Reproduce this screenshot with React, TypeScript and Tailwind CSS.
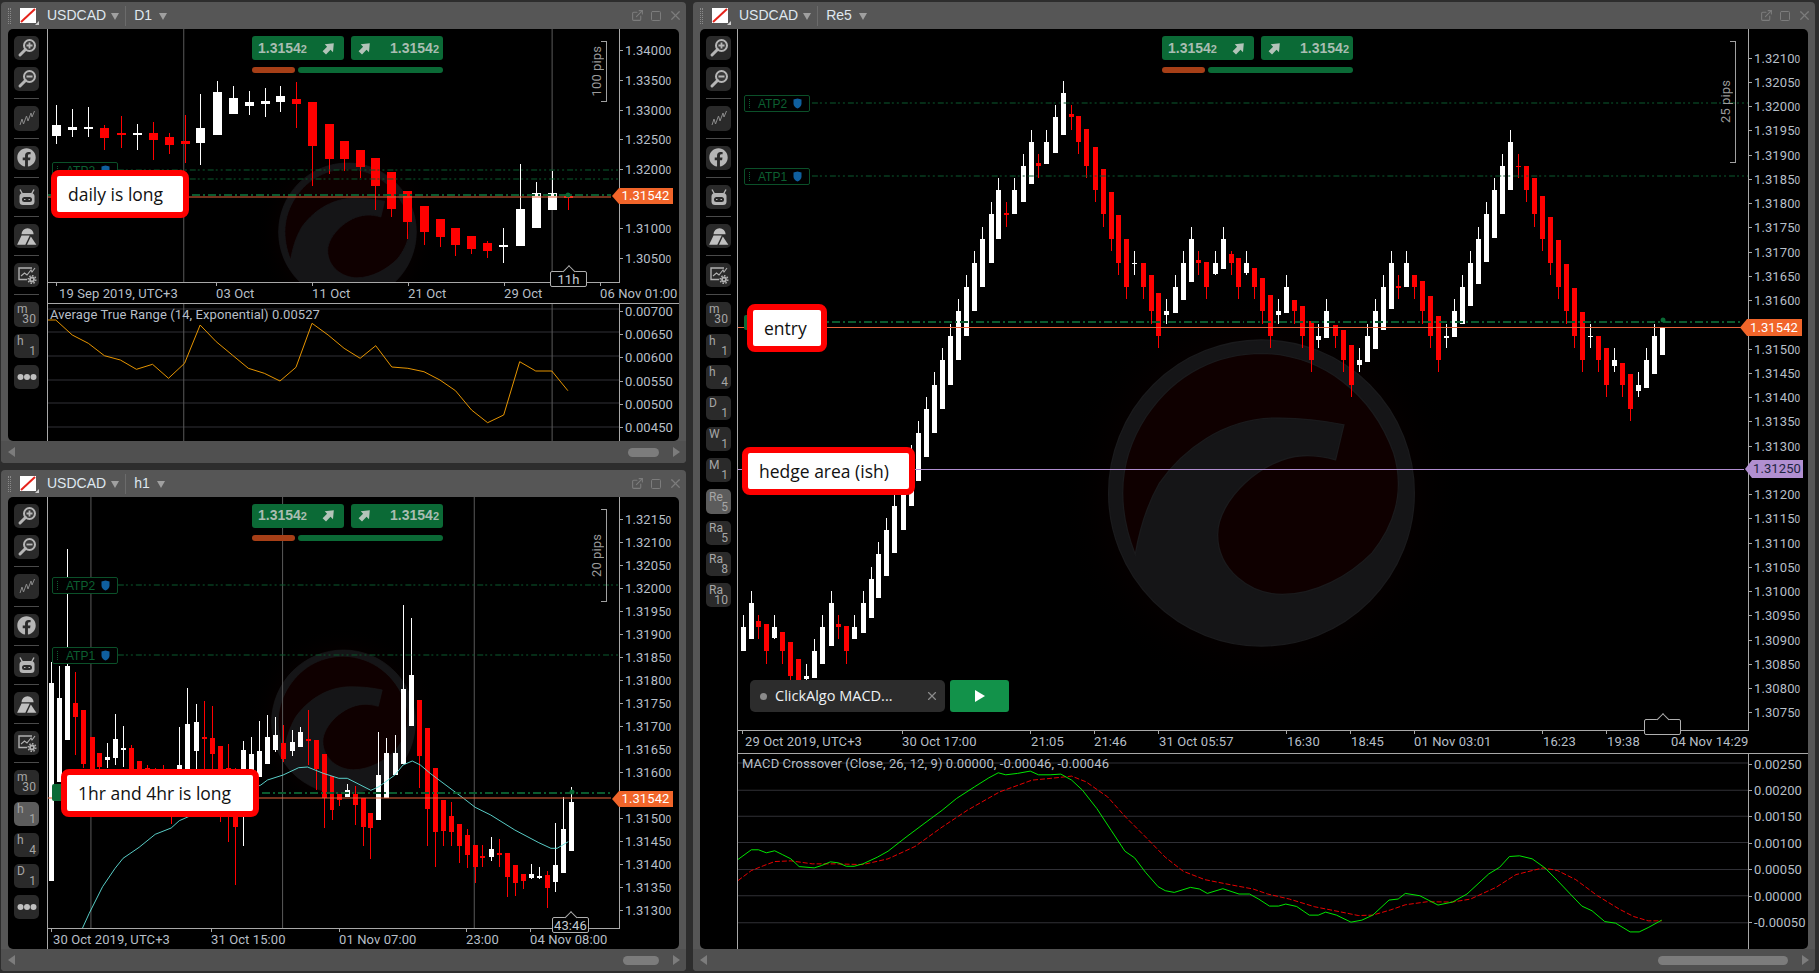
import React from "react";
import { ExternalLink, Square, X } from "lucide-react";
import { FaFacebook } from "react-icons/fa";

type Raw = [number, number, number, number, number, number];
type Pt = [number, number];

// candle rows are read off zoomed crops: [x, high, top, bottom, low, bull]
const scaleCandles = (rows: Raw[], sx: number, ox: number, oy: number): Raw[] =>
  rows.map(([x, h, t, b, l, c]) => [x / sx + ox, h / 3 + oy, t / 3 + oy, b / 3 + oy, l / 3 + oy, c]);

const scalePts = (rows: Pt[], sx: number, ox: number, oy: number): Pt[] =>
  rows.map(([x, y]) => [x / sx + ox, y / 3 + oy]);

const D1_CANDLES = scaleCandles(
  [
    [126, 315, 375, 408, 432, 1], [162, 327, 381, 390, 411, 1], [198, 321, 381, 387, 411, 1], [234, 375, 384, 414, 450, 0],
    [270, 348, 399, 402, 444, 0], [306, 372, 399, 402, 450, 1], [342, 366, 399, 420, 480, 0], [378, 399, 411, 435, 462, 0],
    [414, 345, 423, 432, 490, 0], [449, 282, 384, 429, 495, 1], [485, 243, 276, 405, 405, 1], [521, 258, 294, 342, 342, 1],
    [557, 273, 306, 318, 345, 1], [593, 264, 303, 312, 351, 1], [628, 258, 288, 306, 336, 1], [664, 246, 297, 312, 384, 0],
    [700, 306, 306, 438, 558, 0], [736, 372, 372, 477, 522, 0], [772, 423, 423, 477, 513, 0], [808, 450, 450, 501, 534, 0],
    [843, 474, 474, 558, 630, 0], [879, 516, 516, 627, 651, 0], [915, 573, 573, 666, 717, 0], [951, 618, 618, 696, 735, 0],
    [987, 657, 657, 711, 741, 0], [1022, 684, 684, 735, 768, 0], [1058, 708, 708, 747, 762, 0], [1094, 723, 729, 753, 774, 0],
    [1130, 684, 735, 741, 789, 1], [1166, 492, 627, 738, 738, 1], [1202, 546, 579, 684, 684, 1], [1238, 513, 579, 630, 630, 1],
    [1274, 585, 588, 590, 630, 0],
  ],
  2.24, 0, 0
);

const H1_CANDLES = scaleCandles(
  [
    [115, 590, 654, 1248, 1248, 1], [133, 603, 699, 950, 950, 1], [151, 252, 603, 825, 825, 1], [169, 621, 714, 756, 870, 0],
    [187, 735, 735, 897, 910, 0], [205, 816, 816, 1000, 1010, 0], [222, 864, 864, 905, 1000, 0], [240, 834, 876, 885, 910, 1],
    [258, 747, 822, 879, 900, 1], [276, 783, 849, 852, 905, 1], [294, 840, 849, 960, 1000, 0], [312, 888, 888, 1000, 1010, 0],
    [330, 900, 910, 1000, 1010, 0], [348, 910, 920, 1000, 1010, 0], [366, 900, 920, 1000, 1020, 0], [384, 950, 960, 1050, 1077, 0],
    [402, 786, 900, 1000, 1010, 1], [420, 669, 777, 1000, 1010, 1], [438, 717, 771, 858, 912, 1], [456, 708, 816, 822, 960, 0],
    [474, 723, 819, 867, 960, 0], [492, 843, 843, 1050, 1070, 0], [510, 837, 909, 1055, 1130, 0], [527, 910, 1055, 1085, 1260, 0],
    [545, 828, 856, 1000, 1142, 1], [563, 816, 866, 1000, 1000, 1], [581, 768, 858, 935, 935, 1], [599, 750, 816, 897, 897, 1],
    [617, 756, 810, 855, 860, 1], [635, 780, 834, 882, 890, 0], [653, 795, 831, 858, 872, 1], [671, 786, 801, 846, 846, 1],
    [689, 735, 822, 825, 900, 0], [707, 825, 825, 912, 975, 0], [725, 867, 867, 1000, 1088, 0], [743, 933, 933, 1035, 1065, 0],
    [761, 987, 987, 1005, 1023, 0], [779, 957, 975, 996, 996, 1], [797, 963, 987, 1020, 1080, 0], [815, 1000, 1000, 1086, 1143, 0],
    [832, 1043, 1043, 1089, 1182, 0], [850, 801, 930, 1065, 1065, 1], [868, 819, 864, 1000, 1000, 1], [886, 810, 864, 930, 930, 1],
    [904, 420, 672, 897, 897, 1], [922, 459, 630, 783, 783, 1], [940, 705, 705, 873, 970, 0], [958, 789, 789, 1032, 1143, 0],
    [976, 909, 909, 1101, 1206, 0], [994, 1005, 1005, 1098, 1143, 0], [1012, 1011, 1053, 1101, 1143, 0], [1030, 1077, 1077, 1144, 1194, 0],
    [1048, 1092, 1110, 1170, 1210, 0], [1066, 1140, 1140, 1206, 1254, 0], [1083, 1140, 1173, 1176, 1206, 0], [1101, 1116, 1152, 1176, 1188, 1],
    [1119, 1122, 1164, 1167, 1206, 0], [1137, 1164, 1164, 1236, 1296, 0], [1155, 1200, 1200, 1254, 1293, 0], [1173, 1227, 1227, 1248, 1272, 0],
    [1191, 1197, 1227, 1239, 1242, 1], [1209, 1206, 1233, 1236, 1242, 1], [1227, 1218, 1230, 1269, 1329, 0], [1245, 1074, 1200, 1251, 1281, 1],
    [1263, 996, 1092, 1224, 1224, 1], [1281, 966, 1011, 1158, 1158, 1],
  ],
  2.24, 0, 465
);

const RE5_CANDLES = [
  ...scaleCandles(
    [
      [147, 405, 441, 513, 513, 1], [168, 333, 369, 477, 477, 1], [190, 405, 423, 441, 477, 0], [212, 432, 432, 513, 552, 0],
      [234, 405, 441, 474, 477, 1], [256, 456, 456, 513, 552, 0], [278, 486, 486, 588, 600, 0], [301, 537, 537, 600, 600, 0],
      [323, 552, 588, 597, 603, 1], [345, 477, 513, 594, 594, 1], [367, 405, 441, 552, 552, 1], [390, 333, 369, 498, 498, 1],
      [412, 405, 432, 441, 477, 0], [434, 438, 438, 513, 552, 0], [456, 405, 441, 477, 477, 1], [479, 333, 369, 459, 459, 1],
      [501, 261, 297, 414, 414, 1], [523, 186, 222, 354, 354, 1], [545, 114, 150, 288, 288, 1], [567, 45, 78, 219, 219, 1],
      [590, 10, 45, 150, 150, 1],
    ],
    2.775, 690, 480
  ),
  ...scaleCandles(
    [
      [612, 1335, 1370, 1518, 1518, 1], [634, 1263, 1299, 1443, 1443, 1], [656, 1191, 1227, 1371, 1371, 1], [678, 1116, 1155, 1299, 1299, 1],
      [700, 1044, 1080, 1227, 1227, 1], [722, 972, 1008, 1155, 1155, 1], [745, 897, 933, 1080, 1080, 1], [767, 825, 861, 1008, 1008, 1],
      [789, 753, 789, 933, 933, 1], [811, 681, 717, 861, 861, 1], [834, 606, 642, 789, 789, 1], [856, 534, 570, 717, 717, 1],
      [878, 606, 640, 642, 681, 0], [900, 534, 570, 642, 642, 1], [923, 462, 498, 606, 606, 1], [945, 390, 426, 552, 552, 1],
      [967, 462, 489, 498, 534, 0], [989, 390, 426, 492, 492, 1], [1012, 315, 351, 459, 459, 1], [1034, 243, 279, 405, 405, 1],
      [1056, 315, 342, 351, 390, 0], [1078, 348, 348, 426, 462, 0], [1100, 387, 387, 498, 534, 0], [1123, 441, 441, 570, 606, 0],
      [1145, 507, 507, 642, 681, 0], [1167, 576, 576, 717, 753, 0], [1189, 645, 645, 789, 825, 0], [1211, 717, 717, 861, 897, 0],
      [1233, 753, 788, 790, 825, 1], [1256, 789, 789, 861, 897, 0], [1278, 825, 825, 933, 972, 0], [1300, 879, 879, 1008, 1044, 0],
      [1322, 897, 933, 945, 972, 1], [1345, 825, 861, 939, 939, 1], [1367, 753, 789, 900, 900, 1], [1389, 681, 717, 846, 846, 1],
      [1411, 753, 780, 789, 825, 0], [1433, 786, 786, 861, 897, 0], [1456, 753, 789, 822, 825, 1], [1478, 681, 717, 807, 807, 1],
      [1500, 753, 762, 789, 825, 0], [1522, 774, 774, 861, 897, 0], [1547, 753, 789, 819, 825, 1],
    ],
    2.775, 690, 0
  ),
  ...scaleCandles(
    [
      [14, 804, 804, 861, 897, 0], [37, 834, 834, 933, 972, 0], [59, 885, 885, 1008, 1044, 0], [81, 897, 933, 945, 972, 1],
      [103, 825, 861, 939, 939, 1], [125, 900, 900, 933, 972, 0], [147, 918, 918, 1008, 1044, 0], [170, 963, 963, 1080, 1116, 0],
      [191, 972, 1008, 1020, 1044, 1], [213, 897, 933, 1014, 1014, 1], [236, 975, 975, 1008, 1044, 0], [258, 990, 990, 1080, 1116, 0],
      [280, 1035, 1035, 1155, 1191, 0], [302, 1044, 1080, 1095, 1116, 1], [324, 972, 1008, 1086, 1086, 1], [346, 897, 933, 1047, 1047, 1],
      [368, 825, 861, 990, 990, 1], [390, 753, 789, 927, 927, 1], [412, 825, 858, 861, 897, 0], [434, 753, 789, 861, 861, 1],
      [456, 825, 825, 861, 897, 0], [478, 843, 843, 933, 972, 0], [500, 888, 888, 1008, 1044, 0], [522, 948, 948, 1080, 1116, 0],
      [544, 972, 1008, 1014, 1044, 1], [566, 897, 933, 1011, 1011, 1], [588, 825, 861, 972, 972, 1], [610, 753, 789, 918, 918, 1],
      [632, 681, 717, 852, 852, 1], [654, 606, 642, 786, 786, 1], [676, 534, 570, 714, 714, 1], [698, 462, 498, 642, 642, 1],
      [720, 390, 426, 570, 570, 1], [742, 462, 497, 499, 534, 0], [764, 498, 498, 570, 606, 0], [786, 534, 534, 642, 681, 0],
      [808, 588, 588, 717, 753, 0], [830, 651, 651, 789, 825, 0], [852, 720, 720, 861, 897, 0], [874, 792, 792, 933, 972, 0],
      [896, 864, 864, 1008, 1044, 0], [918, 936, 936, 1080, 1116, 0], [940, 972, 1007, 1009, 1044, 1], [962, 1008, 1008, 1080, 1116, 0],
      [984, 1044, 1044, 1155, 1191, 0], [1007, 1044, 1080, 1098, 1116, 1], [1029, 1089, 1089, 1155, 1191, 0], [1051, 1122, 1122, 1227, 1263, 0],
      [1073, 1116, 1155, 1173, 1191, 1], [1095, 1044, 1080, 1164, 1164, 1], [1117, 972, 1008, 1122, 1122, 1], [1139, 984, 984, 1065, 1065, 1],
    ],
    2.756, 1250, 0
  ),
];

const ATR_LINE = scalePts(
  [
    [105, 960], [125, 960], [162, 1005], [198, 1030], [234, 1067], [270, 1080], [306, 1108], [342, 1093], [378, 1135], [414, 1090], [449, 975],
    [485, 1025], [521, 1065], [557, 1105], [593, 1120], [628, 1143], [664, 1102], [700, 970], [736, 1005], [772, 1045], [808, 1075], [843, 1037],
    [879, 1101], [915, 1105], [951, 1115], [987, 1140], [1022, 1172], [1058, 1230], [1094, 1268], [1130, 1245], [1166, 1085], [1202, 1113],
    [1238, 1113], [1274, 1172],
  ],
  2.24, 0, 0
);

const CYAN_LINE = scalePts(
  [
    [185, 1389], [200, 1345], [230, 1265], [258, 1210], [276, 1180], [312, 1147], [348, 1108], [384, 1089], [402, 1067], [585, 960], [600, 945],
    [635, 930], [670, 908], [690, 906], [725, 925], [760, 940], [779, 940], [832, 976], [850, 965], [886, 930], [904, 900], [925, 888], [943, 900],
    [965, 925], [985, 945], [1040, 1000], [1066, 1027], [1101, 1050], [1155, 1095], [1209, 1133], [1236, 1150], [1250, 1150], [1275, 1130],
  ],
  2.24, 0, 465
);

const MACD_GREEN = [
  ...scalePts(
    [
      [133, 1137], [170, 1108], [190, 1108], [212, 1117], [235, 1111], [256, 1122], [280, 1135], [303, 1158], [345, 1162], [365, 1155], [390, 1144],
      [412, 1147], [434, 1157], [456, 1157], [480, 1150], [520, 1130], [550, 1112], [600, 1070], [650, 1030], [700, 990], [740, 955], [790, 920],
      [830, 893], [856, 878], [877, 884], [910, 880], [945, 873], [968, 884], [1000, 884], [1030, 882], [1060, 900], [1090, 930], [1130, 985],
      [1170, 1050], [1208, 1112], [1235, 1132], [1265, 1175], [1300, 1218], [1320, 1230], [1345, 1235], [1390, 1220], [1415, 1225], [1437, 1238],
      [1480, 1224], [1525, 1240],
    ],
    2.775, 690, 480
  ),
  ...scalePts(
    [
      [0, 1240], [25, 1255], [55, 1276], [80, 1276], [100, 1270], [130, 1277], [165, 1303], [190, 1303], [210, 1294], [240, 1303], [280, 1324],
      [310, 1318], [340, 1303], [385, 1258], [410, 1255], [430, 1238], [470, 1245], [520, 1273], [560, 1264], [600, 1240], [660, 1180], [690, 1160],
      [717, 1128], [745, 1126], [780, 1135], [815, 1162], [850, 1200], [885, 1240], [917, 1276], [945, 1290], [980, 1322], [1010, 1327], [1050, 1353],
      [1075, 1353], [1100, 1340], [1137, 1318],
    ],
    2.756, 1250, 480
  ),
];

const MACD_RED = [
  ...scalePts(
    [
      [133, 1200], [170, 1170], [205, 1155], [235, 1143], [280, 1141], [340, 1150], [400, 1150], [480, 1152], [550, 1135], [625, 1098], [700, 1040],
      [770, 990], [860, 935], [950, 900], [1000, 895], [1060, 888], [1100, 905], [1160, 950], [1210, 1010], [1270, 1075], [1320, 1130], [1370, 1172],
      [1430, 1197], [1500, 1212],
    ],
    2.775, 690, 480
  ),
  ...scalePts(
    [
      [10, 1225], [50, 1240], [110, 1255], [180, 1278], [250, 1293], [300, 1304], [340, 1303], [390, 1287], [430, 1272], [490, 1263], [560, 1264],
      [610, 1255], [680, 1220], [735, 1182], [810, 1162], [850, 1170], [900, 1197], [960, 1245], [1020, 1285], [1060, 1307], [1100, 1320], [1137, 1320],
    ],
    2.756, 1250, 480
  ),
];

const FONT = "font-['Liberation_Sans',Arial,sans-serif]";
const AXIS_FONT = "font-['Roboto','Liberation_Sans',sans-serif] tracking-[0.1px]";

const toPoints = (pts: Pt[]) => pts.map(([x, y]) => `${x.toFixed(1)},${y.toFixed(1)}`).join(" ");

function Candles({ items, width }: { items: Raw[]; width: number }) {
  return (
    <g shapeRendering="crispEdges">
      {items.map(([x, h, t, b, l, bull], i) => {
        const cx = Math.round(x);
        const fill = bull ? "#ffffff" : "#ff0000";
        return (
          <g key={i} fill={fill}>
            <rect x={cx} y={h} width={1} height={Math.max(l - h, 1)} />
            <rect x={cx - (width - 1) / 2} y={t} width={width} height={Math.max(b - t, 1.5)} />
          </g>
        );
      })}
    </g>
  );
}

function Watermark({ id, cx, cy, r }: { id: string; cx: number; cy: number; r: number }) {
  return (
    <g>
      <defs>
        <radialGradient id={id}>
          <stop offset="0%" stopColor="#0e0000" />
          <stop offset="70%" stopColor="#060000" />
          <stop offset="100%" stopColor="#000000" stopOpacity="0" />
        </radialGradient>
      </defs>
      <circle cx={cx} cy={cy} r={r * 1.35} fill={`url(#${id})`} />
      <g transform={`translate(${cx} ${cy}) scale(${r / 460}) translate(-517 -520)`}>
        <circle cx="517" cy="520" r="460" fill="#151517" stroke="#1a1a1c" strokeWidth="4" />
        <path
          d="M137 705C80 560 85 420 170 290C260 155 390 100 520 100C700 105 850 220 915 400C945 500 930 600 850 700C780 770 680 825 580 825C480 825 385 750 385 645C385 540 520 415 640 408C680 405 710 412 740 420L765 315C690 300 620 293 550 295C400 300 280 390 210 490C170 560 150 630 137 705Z"
          fill="#0f0000"
          stroke="#1a1a1c"
          strokeWidth="4"
        />
      </g>
    </g>
  );
}

function Plot({ box, children, className }: { box: string; children: React.ReactNode; className: string }) {
  return (
    <div className={`relative min-w-0 flex-1 overflow-hidden ${className}`}>
      <svg className="absolute inset-0 h-full w-full" viewBox={box} preserveAspectRatio="none">
        {children}
      </svg>
    </div>
  );
}

function HLine({ x1, x2, y, color, dash, w = 1 }: { x1: number; x2: number; y: number; color: string; dash?: string; w?: number }) {
  return <line x1={x1} x2={x2} y1={y} y2={y} stroke={color} strokeWidth={w} strokeDasharray={dash} shapeRendering="crispEdges" />;
}

function VLine({ x, y1, y2 }: { x: number; y1: number; y2: number }) {
  return <line x1={x} x2={x} y1={y1} y2={y2} stroke="#5a5a5a" shapeRendering="crispEdges" />;
}

function AxisLabel({ value, small }: { value: string; small: boolean }) {
  if (!small) return <span>{value}</span>;
  return (
    <span>
      {value.slice(0, -1)}
      <span className="text-[10px]">{value.slice(-1)}</span>
    </span>
  );
}

function PriceAxis({
  labels,
  rowClass,
  padClass,
  small = true,
}: {
  labels: string[];
  rowClass: string;
  padClass: string;
  small?: boolean;
}) {
  return (
    <div className={`w-[60px] shrink-0 border-l border-[#a8a8a8] text-[13px] leading-none text-[#b7bfc7] ${AXIS_FONT}`}>
      <div className={`flex flex-col ${padClass}`}>
        {labels.map((p, i) => (
          <div key={i} className={`flex shrink-0 items-center gap-[2px] ${rowClass}`}>
            <span className="h-px w-[3px] bg-[#a8a8a8]" />
            {p && <AxisLabel value={p} small={small} />}
          </div>
        ))}
      </div>
    </div>
  );
}

function TimeRow({ x0, ticks, labels, className }: { x0: number; ticks: number[]; labels: [number, string][]; className: string }) {
  return (
    <div className={`relative shrink-0 text-[13px] text-[#b7bfc7] ${AXIS_FONT} ${className}`}>
      {ticks.map((t) => (
        <span key={t} className="absolute top-0 h-[3px] w-px bg-[#a8a8a8]" style={{ left: t - x0 }} />
      ))}
      {labels.map(([x, text]) => (
        <span key={text} className="absolute top-[2px] whitespace-nowrap leading-[18px]" style={{ left: x - x0 }}>
          {text}
        </span>
      ))}
    </div>
  );
}

function Arrow() {
  return (
    <svg width="13" height="13" viewBox="0 0 11 11">
      <path d="M.5 7.800 4.300 4 2.300 1.800 10 1 9.300 8.700 7.200 6.600 3.400 10.500Z" fill="#b3c4b9" />
    </svg>
  );
}

function PriceButtons({ className }: { className: string }) {
  const price = (
    <span className={`text-[14px] font-bold text-[#a9bdb1] ${FONT}`}>
      1.3154<span className="text-[11px]">2</span>
    </span>
  );
  return (
    <div className={`absolute flex w-[191px] flex-col gap-[7px] ${className}`}>
      <div className="flex gap-[7px]">
        <div className="flex h-6 w-[92px] items-center justify-between rounded-[3px] bg-[#0b6a36] pl-[6px] pr-[9px]">
          {price}
          <Arrow />
        </div>
        <div className="flex h-6 w-[92px] items-center justify-between rounded-[3px] bg-[#0b6a36] pl-[7px] pr-[4px]">
          <Arrow />
          {price}
        </div>
      </div>
      <div className="flex gap-[3px]">
        <div className="h-[6px] w-[43px] rounded-full bg-[#a63f17]" />
        <div className="h-[6px] w-[145px] rounded-full bg-[#0b6a36]" />
      </div>
    </div>
  );
}

function Annotation({ text, className }: { text: string; className: string }) {
  return (
    <div className={`absolute flex h-12 items-center rounded-[8px] border-[6px] border-[#ff0000] bg-white pl-[11px] text-[17.500px] text-[#111] font-['Open_Sans',sans-serif] ${className}`}>
      {text}
    </div>
  );
}

function Flag({ text, className }: { text: string; className: string }) {
  return (
    <div
      className={`absolute flex items-center justify-center pl-[6px] text-[13px] [clip-path:polygon(0_50%,7px_0,100%_0,100%_100%,7px_100%)] ${AXIS_FONT} ${className}`}
    >
      {text}
    </div>
  );
}

function Pips({ text, className }: { text: string; className: string }) {
  return (
    <div className={`absolute flex items-center ${className}`}>
      <span className={`-mr-[4px] w-[16px] rotate-180 text-center text-[13px] leading-[16px] text-[#9a9a9a] [writing-mode:vertical-rl] ${AXIS_FONT}`}>
        {text}
      </span>
      <span className="h-full w-[6px] border-y border-r border-[#a0a0a0]" />
    </div>
  );
}

function AtpTag({ text, className }: { text: string; className: string }) {
  return (
    <div className={`absolute flex h-[17px] w-[66px] items-center rounded-[2px] border border-[#0b5029] bg-black pl-[4px] text-[12px] text-[#0c5f31] ${FONT} ${className}`}>
      <span className="mr-[8px] h-[9px] w-px border-l border-dotted border-[#0c5f31]" />
      {text}
      <svg className="ml-[6px]" width="9" height="11" viewBox="0 0 9 11">
        <path d="M.5 1.500 4.500.5l4 1v4c0 2.400-1.700 4-4 5-2.300-1-4-2.600-4-5Z" fill="#0f5f9e" />
      </svg>
    </div>
  );
}

function TimerBox({ text, className }: { text?: string; className: string }) {
  return (
    <div className={`absolute flex h-4 w-[37px] items-center justify-center rounded-[2px] border border-[#b0b0b0] bg-black text-[13px] leading-none text-[#c4cbd2] ${AXIS_FONT} ${className}`}>
      <span className="absolute -top-[5px] left-1/2 h-[9px] w-[9px] -translate-x-1/2 rotate-45 border-l border-t border-[#b0b0b0] bg-black" />
      <span className="relative">{text}</span>
    </div>
  );
}

/* toolbar icons */
function Magnifier({ plus }: { plus: boolean }) {
  return (
    <svg width="20" height="20" viewBox="0 0 20 20" fill="none" stroke="#b6b6b6">
      <circle cx="12.500" cy="7.500" r="5.500" strokeWidth="2" fill="#3a3a3a" />
      <path d="M8.500 11.500 3 17" strokeWidth="3" strokeLinecap="round" />
      <path d={plus ? "M9.500 7.500h6M12.500 4.500v6" : "M9.500 7.500h6"} strokeWidth="1.800" />
    </svg>
  );
}

function StrokeIcon() {
  return (
    <svg width="20" height="20" viewBox="0 0 20 20" fill="none" stroke="#8a8a8a" strokeWidth="1">
      <path d="M3 17 5 11 6.500 16 9.500 8 11 13 14 5 15 9 17.500 3" />
    </svg>
  );
}

function Robot() {
  return (
    <svg width="20" height="20" viewBox="0 0 20 20" fill="none">
      <path d="M5.500 7 3 2.500M14.500 7 17 2.500" stroke="#b6b6b6" strokeWidth="1.400" />
      <rect x="2.500" y="6" width="15" height="12" rx="3.500" fill="#b6b6b6" />
      <rect x="5" y="10" width="10" height="5" rx="2.500" fill="#2a2a2a" />
      <path d="M7 12.500h1.500M11.500 12.500H13" stroke="#b6b6b6" strokeWidth="1.200" />
    </svg>
  );
}

function Shapes() {
  return (
    <svg width="22" height="22" viewBox="0 0 20 20" fill="#c0c0c0">
      <path d="M5 8.500A5.500 5.500 0 0 1 16 8.500Z" />
      <path d="M5 9.500h7.500L8.500 18H1Z" />
      <path d="M13.500 10.500 18.500 18H10Z" />
    </svg>
  );
}

function ChartSettings() {
  return (
    <svg width="20" height="20" viewBox="0 0 20 20" fill="none" stroke="#b0b0b0">
      <path d="M10 14.500H2V3h13" strokeWidth="1.400" />
      <path d="M4 11 7.500 8 10 10 14 5l1 2 3-4" strokeWidth="1.100" />
      <circle cx="15" cy="14.500" r="2" strokeWidth="1.800" />
      <circle cx="15" cy="14.500" r="3.800" strokeWidth="1.500" strokeDasharray="1.600 1.300" />
    </svg>
  );
}

function Dots() {
  return (
    <svg width="20" height="8" viewBox="0 0 20 8" fill="#c0c0c0">
      <circle cx="3.500" cy="4" r="3" />
      <circle cx="10" cy="4" r="3" />
      <circle cx="16.500" cy="4" r="3" />
    </svg>
  );
}

function ToolBtn({ children, active }: { children: React.ReactNode; active?: boolean }) {
  return (
    <div className={`flex h-[24.2px] w-[25px] shrink-0 items-center justify-center rounded-[5px] ${active ? "bg-[#5c5c5c]" : "bg-[#2a2a2a]"}`}>
      {children}
    </div>
  );
}

function PeriodBtn({ top, bottom, active }: { top: string; bottom: string; active?: boolean }) {
  return (
    <div className={`flex h-[24.2px] w-[25px] shrink-0 flex-col justify-center rounded-[5px] px-[3px] text-[12px] leading-[10px] text-[#a6a6a6] ${AXIS_FONT} ${active ? "bg-[#5c5c5c]" : "bg-[#2a2a2a]"}`}>
      <span className="self-start">{top}</span>
      <span className="self-end">{bottom}</span>
    </div>
  );
}

const Sep = () => <div className="h-px w-[25px] shrink-0 bg-[#4a4a4a]" />;

function Toolbar({ periods, className }: { periods: { t: string; b: string; active?: boolean }[]; className: string }) {
  return (
    <div className={`flex shrink-0 flex-col gap-[7px] pt-[7px] ${className}`}>
      <ToolBtn><Magnifier plus /></ToolBtn>
      <ToolBtn><Magnifier plus={false} /></ToolBtn>
      <Sep />
      <ToolBtn><StrokeIcon /></ToolBtn>
      <Sep />
      <ToolBtn><FaFacebook size={19} color="#b6b6b6" /></ToolBtn>
      <Sep />
      <ToolBtn><Robot /></ToolBtn>
      <Sep />
      <ToolBtn><Shapes /></ToolBtn>
      <Sep />
      <ToolBtn><ChartSettings /></ToolBtn>
      <Sep />
      {periods.map((p) => (
        <PeriodBtn key={p.t + p.b} top={p.t} bottom={p.b} active={p.active} />
      ))}
      {periods.length < 6 && <ToolBtn><Dots /></ToolBtn>}
    </div>
  );
}

function Caret() {
  return (
    <svg width="8" height="8" viewBox="0 0 8 8" className="block shrink-0">
      <path d="M0 1h8L4 8Z" fill="#a0a0a0" />
    </svg>
  );
}

function Header({ tf }: { tf: string }) {
  return (
    <div className={`flex h-[27px] shrink-0 items-center pl-[7px] pr-[3px] text-[14px] text-[#dfe7ef] ${FONT}`}>
      <span className="h-[16px] w-[3px] border-x border-dotted border-[#8a8a8a]" />
      <span className="relative ml-[9px] h-[15px] w-[16px] bg-white">
        <svg className="h-full w-full" viewBox="0 0 16 15">
          <path d="M1 14 15 1" stroke="#e5231b" strokeWidth="2" />
        </svg>
        <span className="absolute -bottom-[2px] -right-[3px] h-0 w-0 border-b-[4px] border-l-[4px] border-b-[#cfcfcf] border-l-transparent" />
      </span>
      <span className="ml-[11px]">USDCAD</span>
      <span className="ml-[5px]"><Caret /></span>
      <span className="ml-[6px] h-[20px] w-px bg-[#6b6b6b]" />
      <span className="ml-[8px]">{tf}</span>
      <span className="ml-[7px]"><Caret /></span>
      <div className="ml-auto flex items-center gap-[6px] text-[#7c7c7c]">
        <ExternalLink size={13} />
        <Square size={12} strokeWidth={2} />
        <X size={15} />
      </div>
    </div>
  );
}

function Footer({ thumb }: { thumb: string }) {
  return (
    <div className="flex h-[22px] shrink-0 items-center bg-[#505050] pl-[7px] pr-[6px]">
      <span className="h-0 w-0 border-y-[5px] border-r-[7px] border-y-transparent border-r-[#7c7c7c]" />
      <span className={`ml-auto h-[9px] rounded-full bg-[#7c7c7c] ${thumb}`} />
      <span className="ml-[14px] h-0 w-0 border-y-[5px] border-l-[7px] border-y-transparent border-l-[#7c7c7c]" />
    </div>
  );
}

function Panel({
  tf,
  thumb,
  className,
  toolbar,
  children,
}: {
  tf: string;
  thumb: string;
  className: string;
  toolbar: React.ReactNode;
  children: React.ReactNode;
}) {
  return (
    <div className={`flex flex-col overflow-hidden rounded-[4px] bg-[#565656] ${className}`}>
      <Header tf={tf} />
      <div className="mx-[7px] flex min-h-0 flex-1 overflow-hidden rounded-[5px] bg-black">
        {toolbar}
        {children}
      </div>
      <Footer thumb={thumb} />
    </div>
  );
}

const DOT = "6 2 2 3 2 3";
const DASH = "8 3 2 3";
const GREEN = "#0b5a2e";

// the rows left blank sit under a price flag
const D1_PRICES = ["1.34000", "1.33500", "1.33000", "1.32500", "1.32000", "", "1.31000", "1.30500"];
const H1_PRICES = ["1.32150", "1.32100", "1.32050", "1.32000", "1.31950", "1.31900", "1.31850", "1.31800", "1.31750", "1.31700", "1.31650", "1.31600", "", "1.31500", "1.31450", "1.31400", "1.31350", "1.31300"];
const RE5_PRICES = ["1.32100", "1.32050", "1.32000", "1.31950", "1.31900", "1.31850", "1.31800", "1.31750", "1.31700", "1.31650", "1.31600", "", "1.31500", "1.31450", "1.31400", "1.31350", "1.31300", "", "1.31200", "1.31150", "1.31100", "1.31050", "1.31000", "1.30950", "1.30900", "1.30850", "1.30800", "1.30750"];

function D1Chart() {
  return (
    <div className="relative flex min-w-0 flex-1 flex-col border-l border-[#a8a8a8]">
      <div className="flex h-[254px] shrink-0">
        <Plot box="48 29 572 253" className="border-b border-[#a8a8a8]">
          <Watermark id="glow-d1" cx={348} cy={232} r={69} />
          <VLine x={184} y1={29} y2={282} />
          <VLine x={553} y1={29} y2={282} />
          <Candles items={D1_CANDLES} width={9} />
          <HLine x1={118} x2={620} y={170} color={GREEN} dash={DOT} />
          <HLine x1={118} x2={620} y={179} color={GREEN} dash={DOT} />
          <HLine x1={48} x2={612} y={195} color={GREEN} dash={DASH} w={1.500} />
          <HLine x1={48} x2={612} y={197} color="#e9643a" />
          <circle cx={569} cy={195} r={2.500} fill="#0a6a35" />
        </Plot>
        <PriceAxis labels={D1_PRICES} rowClass="h-[29.7px]" padClass="pt-[7px]" />
      </div>
      <TimeRow
        x0={48}
        className="h-5"
        ticks={[56, 216, 312, 408, 504, 600]}
        labels={[[59, "19 Sep 2019, UTC+3"], [216, "03 Oct"], [312, "11 Oct"], [408, "21 Oct"], [504, "29 Oct"], [600, "06 Nov 01:00"]]}
      />
      <div className="flex min-h-0 flex-1 border-t border-[#a8a8a8]">
        <Plot box="48 304 572 137" className="">
          {[309, 332, 356, 380, 403, 427].map((y) => (
            <HLine key={y} x1={48} x2={620} y={y} color="#303036" />
          ))}
          <VLine x={184} y1={304} y2={441} />
          <VLine x={553} y1={304} y2={441} />
          <polyline points={toPoints(ATR_LINE)} fill="none" stroke="#ffa500" strokeWidth={0.9} />
        </Plot>
        <PriceAxis
          labels={["0.00700", "0.00650", "0.00600", "0.00550", "0.00500", "0.00450"]}
          rowClass="h-[23.2px]"
          padClass="-mt-[4px]"
          small={false}
        />
      </div>
      <span className={`absolute left-[2px] top-[276px] whitespace-nowrap text-[13px] text-[#b7bfc7] ${AXIS_FONT}`}>
        Average True Range (14, Exponential) 0.00527
      </span>

      <PriceButtons className="left-[204px] top-[7px]" />
      <Pips text="100 pips" className="left-[541px] top-[12px] h-[61px]" />
      <AtpTag text="ATP2" className="left-[4px] top-[133px]" />
      <Annotation text="daily is long" className="left-[3px] top-[141px] w-[138px]" />
      <Flag text="1.31542" className="left-[564px] top-[159px] h-4 w-[61px] bg-[#f1652a] text-white" />
      <TimerBox text="11h" className="left-[502px] top-[242px]" />
    </div>
  );
}

function H1Chart() {
  return (
    <div className="relative flex min-w-0 flex-1 flex-col border-l border-[#a8a8a8]">
      <div className="flex h-[432px] shrink-0">
        <Plot box="48 497 572 431" className="border-b border-[#a8a8a8]">
          <Watermark id="glow-h1" cx={344} cy={722} r={72} />
          <VLine x={91} y1={497} y2={928} />
          <VLine x={283} y1={497} y2={928} />
          <VLine x={475} y1={497} y2={928} />
          <Candles items={H1_CANDLES} width={5} />
          <polyline points={toPoints(CYAN_LINE)} fill="none" stroke="#62e3dc" strokeWidth={0.9} />
          <HLine x1={118} x2={620} y={585} color={GREEN} dash={DOT} />
          <HLine x1={118} x2={620} y={655} color={GREEN} dash={DOT} />
          <HLine x1={118} x2={612} y={793} color={GREEN} dash={DASH} w={1.500} />
          <HLine x1={48} x2={612} y={798} color="#e9643a" />
          <circle cx={573} cy={792} r={2.500} fill="#0a6a35" />
        </Plot>
        <PriceAxis labels={H1_PRICES} rowClass="h-[23.06px]" padClass="pt-[10.500px]" />
      </div>
      <TimeRow
        x0={48}
        className="h-5"
        ticks={[51, 211, 339, 466, 530]}
        labels={[[53, "30 Oct 2019, UTC+3"], [211, "31 Oct 15:00"], [339, "01 Nov 07:00"], [466, "23:00"], [530, "04 Nov 08:00"]]}
      />

      <PriceButtons className="left-[204px] top-[6.500px]" />
      <Pips text="20 pips" className="left-[541px] top-[12px] h-[93px]" />
      <AtpTag text="ATP2" className="left-[4px] top-[80px]" />
      <AtpTag text="ATP1" className="left-[4px] top-[150px]" />
      <div className="absolute left-[4px] top-[287px] h-[17px] w-5 rounded-[2px] bg-[#0b6a36]" />
      <Annotation text="1hr and 4hr is long" className="left-[13px] top-[272px] w-[198px]" />
      <Flag text="1.31542" className="left-[564px] top-[294px] h-4 w-[61px] bg-[#f1652a] text-white" />
      <TimerBox text="43:46" className="left-[504px] top-[420px]" />
    </div>
  );
}

function Re5Chart() {
  return (
    <div className="relative flex min-w-0 flex-1 flex-col border-l border-[#a8a8a8]">
      <div className="flex h-[702px] shrink-0">
        <Plot box="738 29 1011 701" className="border-b border-[#a8a8a8]">
          <Watermark id="glow-re5" cx={1262} cy={493} r={153} />
          <Candles items={RE5_CANDLES} width={5} />
          <HLine x1={812} x2={1749} y={103} color={GREEN} dash={DOT} />
          <HLine x1={812} x2={1749} y={176} color={GREEN} dash={DOT} />
          <HLine x1={816} x2={1742} y={322} color={GREEN} dash={DASH} w={1.500} />
          <HLine x1={738} x2={1742} y={327.500} color="#e9643a" />
          <HLine x1={738} x2={1745} y={469.500} color="#b18fd0" />
          <circle cx={1664} cy={320} r={2.500} fill="#0a6a35" />
        </Plot>
        <PriceAxis labels={RE5_PRICES} rowClass="h-[24.26px]" padClass="pt-[17px]" />
      </div>
      <TimeRow
        x0={738}
        className="h-[22px]"
        ticks={[742, 902, 1030, 1094, 1158, 1286, 1350, 1414, 1542, 1606]}
        labels={[
          [745, "29 Oct 2019, UTC+3"],
          [902, "30 Oct 17:00"],
          [1031, "21:05"],
          [1094, "21:46"],
          [1159, "31 Oct 05:57"],
          [1287, "16:30"],
          [1351, "18:45"],
          [1414, "01 Nov 03:01"],
          [1543, "16:23"],
          [1607, "19:38"],
          [1671, "04 Nov 14:29"],
        ]}
      />
      <div className="flex min-h-0 flex-1 border-t border-[#a8a8a8]">
        <Plot box="738 754 1011 194" className="">
          {[763, 790, 816, 842, 869, 895, 922].map((y) => (
            <HLine key={y} x1={738} x2={1749} y={y} color="#303036" />
          ))}
          <polyline points={toPoints(MACD_RED)} fill="none" stroke="#ff0000" strokeWidth={0.9} strokeDasharray="5 2" />
          <polyline points={toPoints(MACD_GREEN)} fill="none" stroke="#00ff00" strokeWidth={0.9} />
        </Plot>
        <PriceAxis
          labels={["0.00250", "0.00200", "0.00150", "0.00100", "0.00050", "0.00000", "-0.00050"]}
          rowClass="h-[26.400px]"
          padClass="-mt-[3px]"
          small={false}
        />
      </div>
      <span className={`absolute left-[4px] top-[725px] whitespace-nowrap text-[13px] text-[#b7bfc7] ${AXIS_FONT}`}>
        MACD Crossover (Close, 26, 12, 9) 0.00000, -0.00046, -0.00046
      </span>

      <PriceButtons className="left-[424px] top-[7px]" />
      <Pips text="25 pips" className="left-[980px] top-[12px] h-[122px]" />
      <AtpTag text="ATP2" className="left-[6px] top-[66px]" />
      <AtpTag text="ATP1" className="left-[6px] top-[139px]" />
      <div className="absolute left-[6px] top-[286px] h-[15px] w-[10px] rounded-[2px] bg-[#0b6a36]" />
      <Annotation text="entry" className="left-[9px] top-[275px] w-20" />
      <Annotation text="hedge area (ish)" className="left-[4px] top-[418px] w-[173px]" />
      <Flag text="1.31542" className="left-[1002px] top-[290px] h-[17px] w-[62px] bg-[#f1652a] text-white" />
      <Flag text="1.31250" className="left-[1007px] top-[431px] h-[18px] w-[58px] bg-[#b18fd0] text-[#1d2440]" />
      <TimerBox className="left-[906px] top-[690px]" />

      {/* running cBot chip */}
      <div className="absolute left-[12px] top-[651px] flex h-8 gap-[5px]">
        <div className={`flex w-[195px] items-center rounded-[5px] bg-[#2c2c2c] pl-[10px] pr-[6px] text-[14.500px] text-[#eef2f5] font-['Open_Sans',sans-serif]`}>
          <span className="h-[7px] w-[7px] rounded-full bg-[#8a8a8a]" />
          <span className="ml-[8px]">ClickAlgo MACD...</span>
          <X size={14} className="ml-auto text-[#8a8a8a]" />
        </div>
        <div className="flex w-[59px] items-center justify-center rounded-[3px] bg-[#12924a]">
          <svg width="10" height="12" viewBox="0 0 10 12">
            <path d="M0 0 10 6 0 12Z" fill="#fff" />
          </svg>
        </div>
      </div>
    </div>
  );
}

export default function App() {
  return (
    <div className={`flex h-[973px] w-[1819px] gap-[7px] overflow-hidden bg-[#2d2d2d] pb-[2px] pl-px pt-[2px] ${FONT}`}>
      <div className="flex w-[685px] shrink-0 flex-col gap-[7px]">
        <Panel
          tf="D1"
          thumb="w-[31px]"
          className="h-[461px] shrink-0"
          toolbar={
            <Toolbar
              className="w-[39px] pl-[6px]"
              periods={[
                { t: "m", b: "30" },
                { t: "h", b: "1" },
              ]}
            />
          }
        >
          <D1Chart />
        </Panel>
        <Panel
          tf="h1"
          thumb="w-[36px]"
          className="h-[501px] shrink-0"
          toolbar={
            <Toolbar
              className="w-[39px] pl-[6px]"
              periods={[
                { t: "m", b: "30" },
                { t: "h", b: "1", active: true },
                { t: "h", b: "4" },
                { t: "D", b: "1" },
              ]}
            />
          }
        >
          <H1Chart />
        </Panel>
      </div>
      <Panel
        tf="Re5"
        thumb="w-[130px]"
        className="h-[969px] w-[1122px] shrink-0"
        toolbar={
          <Toolbar
            className="w-[37px] pl-[6px]"
            periods={[
              { t: "m", b: "30" },
              { t: "h", b: "1" },
              { t: "h", b: "4" },
              { t: "D", b: "1" },
              { t: "W", b: "1" },
              { t: "M", b: "1" },
              { t: "Re", b: "5", active: true },
              { t: "Ra", b: "5" },
              { t: "Ra", b: "8" },
              { t: "Ra", b: "10" },
            ]}
          />
        }
      >
        <Re5Chart />
      </Panel>
    </div>
  );
}
